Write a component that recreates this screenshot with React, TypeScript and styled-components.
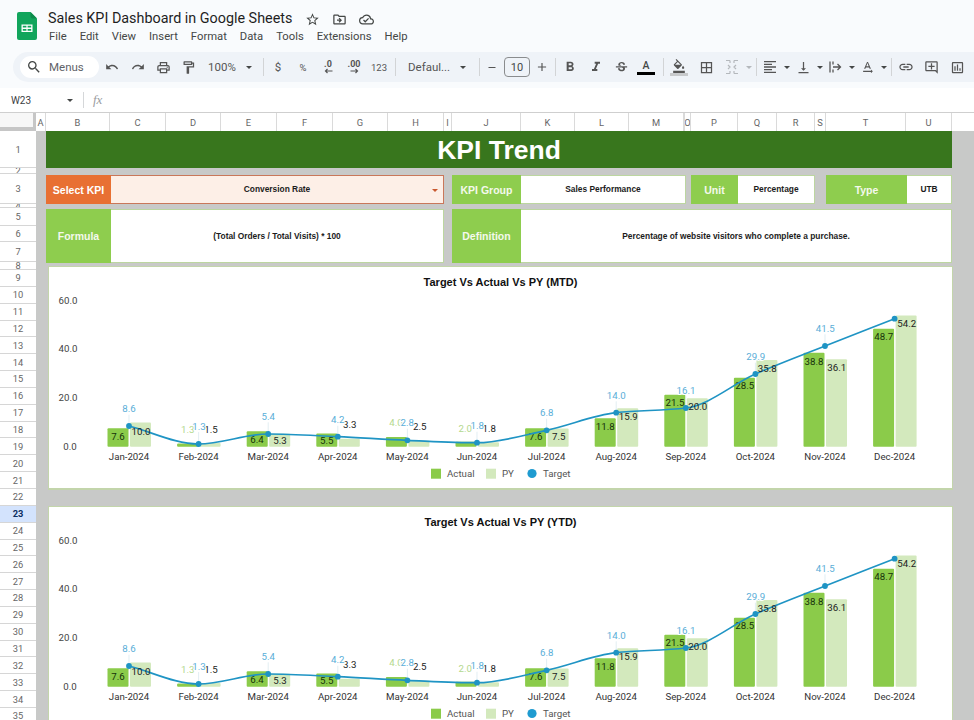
import React from "react";
import styled, { createGlobalStyle } from "styled-components";
import {
  MdSearch, MdUndo, MdRedo, MdOutlineLocalPrintshop, MdOutlineFormatPaint, MdFormatBold, MdFormatItalic,
  MdStrikethroughS, MdOutlineFormatColorFill, MdBorderAll, MdFormatAlignLeft, MdVerticalAlignBottom,
  MdTextRotationNone, MdLink, MdOutlineAddComment, MdOutlineInsertChart, MdStarBorder, MdOutlineDriveFileMove,
  MdOutlineCloudDone, MdAdd, MdRemove,
} from "react-icons/md";

const Global = createGlobalStyle`
  html, body { margin: 0; padding: 0; background: #f9fbfd; }
  #root { width: 974px; height: 720px; overflow: hidden; }
`;

const Page = styled.div`
  width: 974px; height: 720px; overflow: hidden; display: flex; flex-direction: column;
  background: #f9fbfd; font-family: "Liberation Sans", Arial, sans-serif;
`;
const Header = styled.header`display: flex; height: 52px; padding: 12px 0 0 17px; box-sizing: border-box;`;
const TitleCol = styled.div`margin: -3px 0 0 11px; display: flex; flex-direction: column;`;
const TitleRow = styled.div`display: flex; align-items: center; height: 20px; color: #444746;`;
const DocTitle = styled.h1`
  margin: 0 13px 0 0; font: 400 14.35px/20px Roboto, sans-serif; color: #1f1f1f; width: 244px; white-space: nowrap;
`;
const TitleIcons = styled.div`display: flex; gap: 12px; align-items: center;`;
const Menu = styled.nav`display: flex; gap: 13px; height: 16px; margin: 0 0 0 1px; align-items: center;`;
const MenuItem = styled.span`font: 400 11.25px/16px Roboto, sans-serif; color: #444746;`;

const Toolbar = styled.div`
  margin-left: 13px; height: 30px; display: flex; align-items: center; background: #eff3f8;
  border-radius: 15px 0 0 15px; padding-left: 7px; color: #555; overflow: hidden; flex: none;
`;
const SearchPill = styled.div`
  width: 79px; height: 22px; border-radius: 11px; background: #fff; display: flex; align-items: center;
  padding-left: 6px; gap: 7px; box-sizing: border-box; flex: none;
  font: 400 11.5px Roboto, sans-serif; color: #5f6368;
`;
const Slot = styled.div<{ $w: number; $pad?: number; $muted?: boolean }>`
  width: ${(p) => p.$w}px; flex: none; height: 24px; display: flex; align-items: center;
  justify-content: ${(p) => (p.$pad ? "flex-start" : "center")}; padding-left: ${(p) => p.$pad ?? 0}px;
  box-sizing: border-box; gap: 6px; color: ${(p) => (p.$muted ? "#b4b8bc" : "#555")};
  font: 400 11.5px Roboto, sans-serif; position: relative;
`;
const WideGapSlot = styled(Slot)`gap: 10px;`;
const Sep = styled.div<{ $w: number }>`
  width: ${(p) => p.$w}px; flex: none; height: 18px; display: flex; justify-content: center;
  &::before { content: ""; width: 1px; background: #d2d4d6; }
`;
const Caret = styled.span<{ $muted?: boolean }>`
  width: 0; height: 0; flex: none; border-left: 3.5px solid transparent; border-right: 3.5px solid transparent;
  border-top: 3.5px solid ${(p) => (p.$muted ? "#b4b8bc" : "#444746")};
`;
const DecimalMark = styled.span`
  display: flex; flex-direction: column; align-items: center; font: 700 9px/9px Roboto, sans-serif; color: #555;
  svg { margin-top: -1px; }
`;
const SmallNum = styled.span`font: 400 9.5px Roboto, sans-serif;`;
const SizeBox = styled.div`
  width: 26px; height: 20px; margin-left: 6px; flex: none; border: 1px solid #8a8c8e; border-radius: 4px; box-sizing: border-box;
  display: flex; align-items: center; justify-content: center; font: 400 11px Roboto, sans-serif; color: #444746;
`;
const ColorA = styled.span`
  display: flex; flex-direction: column; align-items: center; font: 500 10.5px/11px Roboto, sans-serif; color: #444746;
  &::after { content: ""; width: 18px; height: 3px; background: #000; margin-top: 1px; }
`;
const FillMark = styled.span`
  display: flex; flex-direction: column; align-items: center;
  &::after { content: ""; width: 18px; height: 3px; background: #c8cacc; margin-top: 0; }
`;

const FormulaBar = styled.div`
  margin-top: 6px; height: 24px; flex: none; background: #fff; display: flex; align-items: center; color: #444746;
`;
const NameBox = styled.div`
  width: 84px; height: 16px; flex: none; box-sizing: border-box; padding: 0 10px 0 11px; display: flex; align-items: center;
  justify-content: space-between; border-right: 1px solid #d5d7d9; font: 400 10px Roboto, sans-serif; color: #3c4043;
`;
const Fx = styled.span`margin-left: 9px; font: italic 400 13px "Liberation Serif", serif; color: #9a9c9f;`;

const ColumnHeader = styled.div`
  display: flex; height: 19px; flex: none; background: #fff; border-top: 1px solid #cfcfcf; box-sizing: border-box;
`;
const Corner = styled.div`
  width: 36px; flex: none; box-sizing: border-box; background: #f7f7f7;
  border-right: 3px solid #c6c6c6; border-bottom: 4px solid #c6c6c6;
`;
const ColCell = styled.div<{ $w: number }>`
  width: ${(p) => p.$w}px; flex: none; box-sizing: border-box; border-right: 1px solid #dadada;
  display: flex; align-items: center; justify-content: center; font: 400 9.3px Roboto, sans-serif; color: #666; overflow: hidden;
`;

const Sheet = styled.div`display: flex; flex: 1; min-height: 0; overflow: hidden;`;
const RowRail = styled.div`width: 36px; flex: none; background: #fff;`;
const RowCell = styled.div<{ $h: number; $on?: boolean }>`
  height: ${(p) => p.$h}px; box-sizing: border-box; overflow: hidden; border-bottom: 1px solid #d6d6d6;
  display: flex; align-items: center; justify-content: center;
  font: ${(p) => (p.$on ? 700 : 400)} 9.3px Roboto, sans-serif;
  color: ${(p) => (p.$on ? "#0b2f63" : "#666")}; background: ${(p) => (p.$on ? "#d3e3fd" : "#fff")};
`;
const Canvas = styled.main`
  flex: 1; min-width: 0; background: #c8c9c8; padding: 0 22px 0 10px; display: flex; flex-direction: column;
`;
const Banner = styled.div`
  height: 37px; flex: none; background: #38761d; color: #fff; display: flex; align-items: center; justify-content: center;
  font: 700 26.5px "Liberation Sans", Arial, sans-serif; padding-top: 1px; box-sizing: border-box;
`;
const FieldRow = styled.div`display: flex; height: 29px; margin-top: 7px; flex: none;`;
const DetailRow = styled.div`display: flex; height: 54px; margin-top: 5px; flex: none; gap: 8px;`;
const Group = styled.div<{ $w: number; $gap?: number }>`
  width: ${(p) => p.$w}px; margin-right: ${(p) => p.$gap ?? 0}px; flex: none; display: flex;
`;
const Label = styled.div<{ $w: number; $orange?: boolean }>`
  width: ${(p) => p.$w}px; flex: none; display: flex; align-items: center; justify-content: center;
  background: ${(p) => (p.$orange ? "#e87033" : "#8ecd4e")}; color: ${(p) => (p.$orange ? "#fff" : "#f4f9ec")};
  font: 700 10.5px "Liberation Sans", Arial, sans-serif;
`;
const Value = styled.div`
  flex: 1; display: flex; align-items: center; justify-content: center; background: #fff; box-sizing: border-box;
  border: 1px solid #bcd6a0; border-left: none; font: 700 8.4px "Liberation Sans", Arial, sans-serif; color: #1c1c1c;
  padding-bottom: 1px;
`;
const SelectValue = styled(Value)`
  background: #fdefe7; border-color: #c9775a; position: relative;
`;
const SelectCaret = styled.span`
  position: absolute; right: 5px; top: 13px; width: 0; height: 0; border-left: 3px solid transparent;
  border-right: 3px solid transparent; border-top: 3px solid #c9592f;
`;
const Card = styled.section<{ $top: number }>`
  margin: ${(p) => p.$top}px -1px 0 2px; height: 224px; flex: none; box-sizing: border-box; background: #fff;
  border: 1px solid #c3d5ab; border-bottom-width: 2px; display: flex; flex-direction: column; overflow: hidden;
`;
const CardTitle = styled.h2`
  margin: 0; height: 23px; padding-top: 8px; box-sizing: border-box; flex: none; text-align: center; color: #111;
  font: 700 11px/14px "Liberation Sans", Arial, sans-serif;
`;
const Plot = styled.svg`display: block; flex: none; width: 903px; height: 198px;`;
const ChartText = styled.text<{ $c?: string; $halo?: boolean }>`
  font: 400 9.7px Roboto, sans-serif; fill: ${(p) => p.$c ?? "#222"}; text-anchor: middle; dominant-baseline: central;
  ${(p) => (p.$halo ? "paint-order: stroke; stroke: #fff; stroke-width: 2px;" : "")}
`;
const LegendText = styled(ChartText)`text-anchor: start; fill: #555;`;

const colWidths: [string, number][] = [
  ["A", 10], ["B", 64], ["C", 56], ["D", 55], ["E", 56], ["F", 56], ["G", 55], ["H", 56], ["I", 8], ["J", 69],
  ["K", 54], ["L", 54], ["M", 55], ["", 1], ["O", 6], ["P", 47], ["Q", 39], ["R", 38], ["S", 11], ["T", 80], ["U", 46],
];
const topRows: [string, number][] = [["1", 37], ["2", 6], ["3", 30], ["4", 4], ["5", 18], ["6", 16], ["7", 20], ["8", 8]];
const laterRows = Array.from({ length: 27 }, (_, i) => 9 + i);

const months = ["Jan", "Feb", "Mar", "Apr", "May", "Jun", "Jul", "Aug", "Sep", "Oct", "Nov", "Dec"];
const actual = [7.6, 1.3, 6.4, 5.5, 4.0, 2.0, 7.6, 11.8, 21.5, 28.5, 38.8, 48.7];
const py = [10.0, 1.5, 5.3, 3.3, 2.5, 1.8, 7.5, 15.9, 20.0, 35.8, 36.1, 54.2];
const targetY = [426, 444, 434, 436.7, 440.3, 442.7, 430.3, 412.7, 408, 374, 346, 318.7];
const targetLabels: [string, number, number][] = [
  ["8.6", 129, 408.7], ["1.3", 199, 426], ["5.4", 268.3, 416.3], ["4.2", 337.7, 419.7], ["2.8", 407.3, 422.7],
  ["1.8", 477.3, 425.7], ["6.8", 546.7, 412.7], ["14.0", 616.3, 395.3], ["16.1", 686, 390.3], ["29.9", 755.7, 356.7],
  ["41.5", 825.3, 328.3],
];
const actualLabels: [number, number][] = [
  [118, 436.7], [187.7, 429], [257, 439], [326.7, 440.3], [396, 422.7], [465.3, 428],
  [535.7, 436.7], [605.3, 426], [675, 402.7], [744.7, 385], [814, 361], [883.7, 336.3],
];
const pyLabels: [number, number][] = [
  [141, 431.3], [211, 429], [280, 440.3], [349.7, 424], [419.7, 426], [489.3, 428.3],
  [558.7, 436.7], [628.3, 416.7], [697.7, 406.7], [767.3, 368], [836.7, 367.3], [906.7, 323],
];
const BASE = 446.7;
const UNIT = 2.42;
const cx = (i: number) => 129 + i * 69.6;

function smoothLine(ys: number[]) {
  const n = ys.length;
  const dx = 69.6;
  const d = ys.slice(1).map((y, i) => (y - ys[i]) / dx);
  const m = ys.map((_, i) => {
    if (i === 0) return d[0];
    if (i === n - 1) return d[n - 2];
    if (d[i - 1] * d[i] <= 0) return 0;
    return (2 * d[i - 1] * d[i]) / (d[i - 1] + d[i]);
  });
  let path = `M${cx(0)} ${ys[0]}`;
  for (let i = 0; i < n - 1; i++) {
    path += `C${cx(i) + dx / 3} ${ys[i] + (m[i] * dx) / 3} ${cx(i + 1) - dx / 3} ${ys[i + 1] - (m[i + 1] * dx) / 3} ${cx(i + 1)} ${ys[i + 1]}`;
  }
  return path;
}

function Chart({ title, top }: { title: string; top: number }) {
  return (
    <Card $top={top}>
      <CardTitle>{title}</CardTitle>
      <Plot viewBox="49 290 903 198">
        {["60.0", "40.0", "20.0", "0.0"].map((t, i) => (
          <ChartText key={t} x={i === 3 ? 70 : 68} y={300 + i * 48.9} $c="#444">{t}</ChartText>
        ))}
        {months.map((m, i) => (
          <g key={m}>
            <rect x={cx(i) - 21.5} y={BASE - actual[i] * UNIT} width={21} height={actual[i] * UNIT} fill="#8bcb4a" rx="1" />
            <rect x={cx(i) + 1} y={BASE - py[i] * UNIT} width={21} height={py[i] * UNIT} fill="#d3e9bd" rx="1" />
            <ChartText x={cx(i)} y={456.5} $c="#333">{m}-2024</ChartText>
          </g>
        ))}
        {targetLabels.map(([, x, y], i) => (
          <line key={i} x1={cx(i)} x2={cx(i)} y1={y + 6} y2={targetY[i]} stroke="#d5e6ee" strokeWidth="0.7" />
        ))}
        {actual.map((v, i) => (
          <ChartText key={i} x={actualLabels[i][0]} y={actualLabels[i][1]} $c={i === 1 || i === 4 || i === 5 ? "#b3d88d" : "#16310a"}>
            {v.toFixed(1)}
          </ChartText>
        ))}
        <path d={smoothLine(targetY)} fill="none" stroke="#1f94c4" strokeWidth="1.7" />
        {targetY.map((y, i) => (
          <circle key={i} cx={cx(i)} cy={y} r="2.9" fill="#1f94c4" />
        ))}
        {py.map((v, i) => (
          <ChartText key={i} x={pyLabels[i][0]} y={pyLabels[i][1]}>{v.toFixed(1)}</ChartText>
        ))}
        {targetLabels.map(([t, x, y]) => (
          <ChartText key={x} x={x} y={y} $c="#59aed8" $halo>{t}</ChartText>
        ))}
        <rect x="431" y="468.7" width="10" height="10" fill="#8bcb4a" />
        <LegendText x="447" y="473.5">Actual</LegendText>
        <rect x="486" y="468.7" width="10" height="10" fill="#d3e9bd" />
        <LegendText x="502" y="473.5">PY</LegendText>
        <circle cx="532" cy="473.5" r="4.6" fill="#1f9bd0" />
        <LegendText x="543" y="473.5">Target</LegendText>
      </Plot>
    </Card>
  );
}

const SheetsLogo = () => (
  <svg width="20" height="28" viewBox="0 0 20 28">
    <path d="M2 0h11.5L20 6.5V26a2 2 0 0 1-2 2H2a2 2 0 0 1-2-2V2a2 2 0 0 1 2-2z" fill="#12a55c" />
    <path d="M13.5 0L20 6.5h-4.5a2 2 0 0 1-2-2z" fill="#0c8a4a" />
    <path d="M4.5 12.5h11v7.5h-11z M5.8 13.8v1.8h3.6v-1.8z M10.6 13.8v1.8h3.6v-1.8z M5.8 16.9v1.8h3.6v-1.8z M10.6 16.9v1.8h3.6v-1.8z" fill="#fff" fillRule="evenodd" />
  </svg>
);
const MergeIcon = () => (
  <svg width="16" height="16" viewBox="0 0 16 16" fill="none" stroke="#b4b8bc" strokeWidth="1.2">
    <path d="M2 1.5h4M2 14.5h4M10 1.5h4M10 14.5h4M6 1.5v2.5M10 1.5v2.5M6 12v2.5M10 12v2.5M4 6l2 2-2 2M12 6l-2 2 2 2" />
  </svg>
);
const WrapIcon = () => (
  <svg width="16" height="16" viewBox="0 0 16 16" fill="none" stroke="#555" strokeWidth="1.3">
    <path d="M3 2.5v11M6 2.5v3M6 10.5v3M6 8h7.5M10.5 5l3 3-3 3" />
  </svg>
);
const Arrow = ({ left }: { left?: boolean }) => (
  <svg width="9" height="6" viewBox="0 0 9 6" fill="none" stroke="#555" strokeWidth="1.2">
    <path d={left ? "M8.5 3H1.5M3.5 1L1.5 3l2 2" : "M.5 3h7M5.5 1l2 2-2 2"} />
  </svg>
);

export default function App() {
  return (
    <Page>
      <Global />
      <Header>
        <SheetsLogo />
        <TitleCol>
          <TitleRow>
            <DocTitle>Sales KPI Dashboard in Google Sheets</DocTitle>
            <TitleIcons>
              <MdStarBorder size={15} />
              <MdOutlineDriveFileMove size={15} />
              <MdOutlineCloudDone size={15} />
            </TitleIcons>
          </TitleRow>
          <Menu>
            {["File", "Edit", "View", "Insert", "Format", "Data", "Tools", "Extensions", "Help"].map((m) => (
              <MenuItem key={m}>{m}</MenuItem>
            ))}
          </Menu>
        </TitleCol>
      </Header>
      <Toolbar>
        <SearchPill><MdSearch size={16} color="#444746" />Menus</SearchPill>
        <Slot $w={26}><MdUndo size={14} /></Slot>
        <Slot $w={25}><MdRedo size={14} /></Slot>
        <Slot $w={26}><MdOutlineLocalPrintshop size={15} /></Slot>
        <Slot $w={24}><MdOutlineFormatPaint size={15} /></Slot>
        <WideGapSlot $w={63} $pad={8}>100%<Caret /></WideGapSlot>
        <Sep $w={1} />
        <Slot $w={28}>$</Slot>
        <Slot $w={22}><SmallNum>%</SmallNum></Slot>
        <Slot $w={28}><DecimalMark>.0<Arrow left /></DecimalMark></Slot>
        <Slot $w={24}><DecimalMark>.00<Arrow /></DecimalMark></Slot>
        <Slot $w={26}><SmallNum>123</SmallNum></Slot>
        <Sep $w={6} />
        <WideGapSlot $w={74} $pad={10}>Defaul...<Caret /></WideGapSlot>
        <Sep $w={14} />
        <Slot $w={12}><MdRemove size={13} /></Slot>
        <SizeBox>10</SizeBox>
        <Slot $w={24}><MdAdd size={14} /></Slot>
        <Sep $w={2} />
        <Slot $w={28}><MdFormatBold size={16} /></Slot>
        <Slot $w={24}><MdFormatItalic size={16} /></Slot>
        <Slot $w={26}><MdStrikethroughS size={15} /></Slot>
        <Slot $w={24}><ColorA>A</ColorA></Slot>
        <Sep $w={10} />
        <Slot $w={22}><FillMark><MdOutlineFormatColorFill size={14} /></FillMark></Slot>
        <Slot $w={32}><MdBorderAll size={15} /></Slot>
        <Slot $w={31} $muted><MergeIcon /><Caret $muted /></Slot>
        <Sep $w={6} />
        <Slot $w={34}><MdFormatAlignLeft size={16} /><Caret /></Slot>
        <Slot $w={32}><MdVerticalAlignBottom size={15} /><Caret /></Slot>
        <Slot $w={32}><WrapIcon /><Caret /></Slot>
        <Slot $w={32}><MdTextRotationNone size={15} /><Caret /></Slot>
        <Sep $w={4} />
        <Slot $w={26}><MdLink size={16} /></Slot>
        <Slot $w={25}><MdOutlineAddComment size={15} /></Slot>
        <Slot $w={26}><MdOutlineInsertChart size={15} /></Slot>
      </Toolbar>
      <FormulaBar>
        <NameBox>W23<Caret /></NameBox>
        <Fx>fx</Fx>
      </FormulaBar>
      <ColumnHeader>
        <Corner />
        {colWidths.map(([c, w], i) => (
          <ColCell key={i} $w={w}>{c}</ColCell>
        ))}
      </ColumnHeader>
      <Sheet>
        <RowRail>
          {topRows.map(([r, h]) => (
            <RowCell key={r} $h={h}>{r}</RowCell>
          ))}
          {laterRows.map((r) => (
            <RowCell key={r} $h={16.85} $on={r === 23}>{r}</RowCell>
          ))}
        </RowRail>
        <Canvas>
          <Banner>KPI Trend</Banner>
          <FieldRow>
            <Group $w={398} $gap={8}>
              <Label $w={65} $orange>Select KPI</Label>
              <SelectValue>Conversion Rate<SelectCaret /></SelectValue>
            </Group>
            <Group $w={234} $gap={5}>
              <Label $w={69}>KPI Group</Label>
              <Value>Sales Performance</Value>
            </Group>
            <Group $w={124} $gap={11}>
              <Label $w={47}>Unit</Label>
              <Value>Percentage</Value>
            </Group>
            <Group $w={126}>
              <Label $w={81}>Type</Label>
              <Value>UTB</Value>
            </Group>
          </FieldRow>
          <DetailRow>
            <Group $w={398}>
              <Label $w={65}>Formula</Label>
              <Value>(Total Orders / Total Visits) * 100</Value>
            </Group>
            <Group $w={500}>
              <Label $w={69}>Definition</Label>
              <Value>Percentage of website visitors who complete a purchase.</Value>
            </Group>
          </DetailRow>
          <Chart title="Target Vs Actual Vs PY (MTD)" top={3} />
          <Chart title="Target Vs Actual Vs PY (YTD)" top={15.7} />
        </Canvas>
      </Sheet>
    </Page>
  );
}
